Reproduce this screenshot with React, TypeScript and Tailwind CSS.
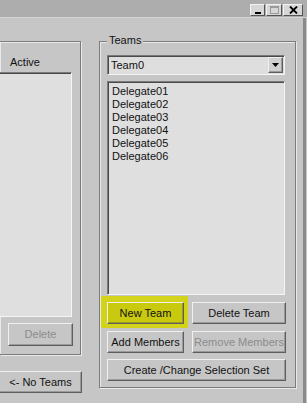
import React from "react";

const font = { fontFamily: '"Liberation Sans", Arial, sans-serif' };

const raisedBorder =
  "border border-t-[#f0f0f0] border-l-[#f0f0f0] border-r-[#5e5e5e] border-b-[#5e5e5e]";
const raised = `${raisedBorder} shadow-[inset_-1px_-1px_0_#9a9a9a]`;
const sunken =
  "border border-t-[#7a7a7a] border-l-[#7a7a7a] border-r-[#f4f4f4] border-b-[#f4f4f4] shadow-[inset_1px_1px_0_#4a4a4a]";
const etched =
  "border-[#7c7c7c] shadow-[inset_1px_1px_0_#e9e9e9,1px_1px_0_#e9e9e9]";

function Btn({
  label,
  disabled,
  highlight,
  className = "",
}: {
  label: string;
  disabled?: boolean;
  highlight?: boolean;
  className?: string;
}) {
  return (
    <div
      className={`${raisedBorder} ${
        highlight
          ? "bg-[#c9c90f] shadow-[inset_-1px_-1px_0_#9a9a20,-1px_-1px_0_5px_#d3d31c]"
          : "shadow-[inset_-1px_-1px_0_#9a9a9a]"
      } flex items-center justify-center h-[22px] text-[11px] leading-none ${
        disabled ? "text-[#8c8c8c]" : "text-[#111]"
      } ${className}`}
    >
      {label}
    </div>
  );
}

function TitleButton({ children, w }: { children: React.ReactNode; w: string }) {
  return (
    <div
      className={`${w} h-[12px] bg-[#d6d6d6] border border-t-[#f2f2f2] border-l-[#f2f2f2] border-r-[#555] border-b-[#555] flex items-center justify-center`}
    >
      {children}
    </div>
  );
}

export default function App() {
  const members = [
    "Delegate01",
    "Delegate02",
    "Delegate03",
    "Delegate04",
    "Delegate05",
    "Delegate06",
  ];

  return (
    <div className="w-[307px] h-[403px] bg-[#c6c6c6] overflow-hidden" style={font}>
      {/* title bar */}
      <div className="h-[17px] bg-[#adadad] flex justify-end items-start pt-[4px] pr-[4px] gap-[1px]">
        <TitleButton w="w-[15px]">
          <div className="w-[6px] h-[2px] bg-black mt-[6px]" />
        </TitleButton>
        <TitleButton w="w-[16px]">
          <div className="w-[9px] h-[8px] border border-[#9a9a9a] border-t-2" />
        </TitleButton>
        <TitleButton w="w-[20px]">
          <svg width="9" height="8" viewBox="0 0 9 8">
            <path d="M1 0.5 L8 7.5 M8 0.5 L1 7.5" stroke="#000" strokeWidth="1.8" />
          </svg>
        </TitleButton>
      </div>
      <div className="h-px bg-[#d4d4d4]" />

      <div className="flex pt-[23px] h-[385px] border-r-[3px] border-[#8a8a8a] w-[306px]">
        {/* left column */}
        <div className="w-[82px] flex flex-col">
          <div className={`w-[81px] border-t border-r border-b ${etched} flex flex-col pb-[8px]`}>
            <div className="pt-[14px] pl-[10px] h-[30px] text-[11px] leading-[13px] text-[#111]">
              Active
            </div>
            <div className="w-[72px] h-[245px] bg-[#dfdfdf] border-t border-r border-b border-t-[#7a7a7a] border-r-[#f6f6f6] border-b-[#f6f6f6] shadow-[inset_0_1px_0_#4a4a4a]" />
            <Btn label="Delete" disabled className="mt-[6px] ml-[8px] w-[65px] h-[23px]" />
          </div>
          <Btn label="<- No Teams" className="mt-[16px] w-[82px] border-l-0" />
        </div>

        {/* teams group */}
        <div className={`relative ml-[17px] w-[197px] h-[347px] border ${etched} pl-[7px] pt-[13px] flex flex-col`}>
          <div className="absolute -top-[8px] left-[7px] px-[2px] bg-[#c6c6c6] text-[11px] leading-[13px] text-[#111]">
            Teams
          </div>

          <div className={`w-[178px] h-[20px] bg-[#dedede] ${sunken} flex items-center justify-between pl-[3px] pr-px`}>
            <span className="text-[11px] leading-none text-[#111]">Team0</span>
            <div className={`w-[15px] h-[16px] bg-[#cfcfcf] ${raised} flex items-center justify-center`}>
              <svg width="7" height="4" viewBox="0 0 7 4">
                <path d="M0 0 H7 L3.5 4 Z" fill="#000" />
              </svg>
            </div>
          </div>

          <div className={`mt-[6px] w-[178px] h-[214px] bg-[#dfdfdf] ${sunken} pl-[4px] pt-[3px] text-[11px] leading-[13px] text-[#111]`}>
            {members.map((m) => (
              <div key={m}>{m}</div>
            ))}
          </div>

          <div className="mt-[7px] flex gap-[8px]">
            <Btn label="New Team" highlight className="w-[77px]" />
            <Btn label="Delete Team" className="w-[94px]" />
          </div>
          <div className="mt-[7px] flex gap-[8px]">
            <Btn label="Add Members" className="w-[77px]" />
            <Btn label="Remove Members" disabled className="w-[94px]" />
          </div>
          <Btn label="Create /Change Selection Set" className="mt-[6px] w-[179px]" />
        </div>
      </div>
    </div>
  );
}
